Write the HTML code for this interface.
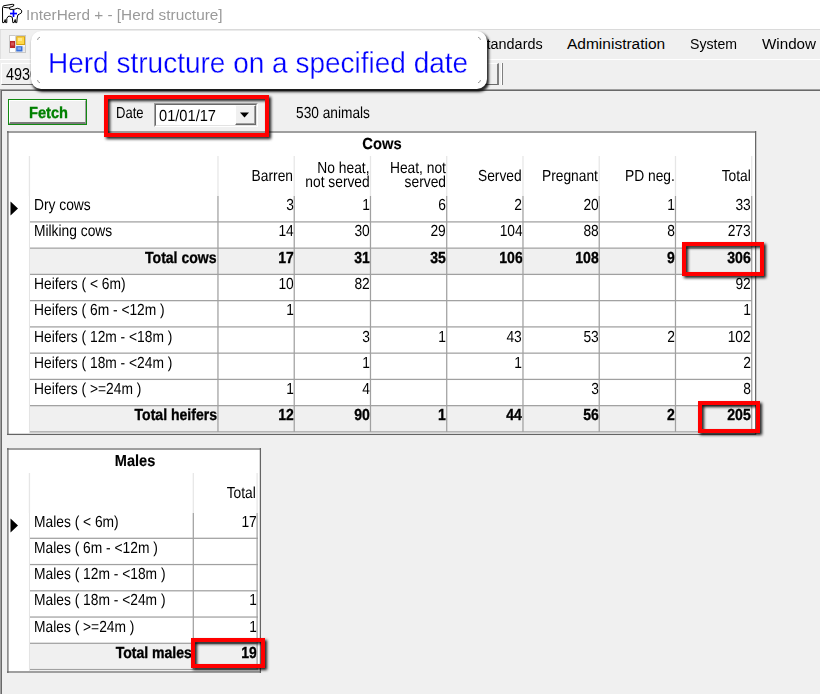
<!DOCTYPE html>
<html><head><meta charset="utf-8"><style>
*{margin:0;padding:0;box-sizing:border-box}
html,body{width:820px;height:694px;overflow:hidden;background:#f0f0f0;font-family:"Liberation Sans",sans-serif;color:#000}
.a{position:absolute}
.t{position:absolute;white-space:pre;line-height:1}
.b{font-weight:bold;-webkit-text-stroke:0.35px currentColor}
.b2{font-weight:bold;-webkit-text-stroke:0.15px currentColor}
.red{position:absolute;border:4px solid #f00;filter:drop-shadow(2px 2px 1.6px rgba(0,0,0,.9))}
</style></head><body>
<div class="a" style="left:0px;top:0px;width:820px;height:29px;background:#fff"></div>
<div class="a" style="left:0px;top:29px;width:820px;height:1px;background:#dadada"></div>
<svg class="a" style="left:0px;top:0px" width="28" height="28" viewBox="0 0 28 28">
 <path d="M2.6 22.6 L2.5 7.6 L3.4 5.8 L12.2 4.3 L13.8 4.5 L13.6 6 L11.8 6.6 L9.2 7.6 L10.2 9.4 L14.1 9.4 L17.3 8.3 L20.2 9.1 L21.8 10.9 L21.4 12.9 L19.4 14.1 L17.9 14.9 L17.2 18 L16.8 22.6 L15.6 22.6 L15.2 19.5 L14.2 22.6 L12.8 22.6 L12.3 17.3 L10 16.1 L8 16.5 L6.8 18.5 L6.8 22.6 L5.6 22.6 L5.2 19.5 L4.2 22.6 Z" fill="#fff" stroke="#000" stroke-width="1" stroke-linejoin="round"/>
 <path d="M3.4 7.3 L8.6 7.9 L10.2 9.4" fill="none" stroke="#000" stroke-width="1"/>
 <rect x="10" y="12.7" width="7" height="1.7" fill="#00f"/>
 <rect x="12.65" y="10" width="1.7" height="7" fill="#00f"/>
</svg>
<div class="t " style="left:26.3px;top:7px;font-size:15.5px;transform-origin:0 0;transform:scaleX(0.99);color:#9a9a9a">InterHerd + - [Herd structure]</div>
<div class="a" style="left:0px;top:30px;width:820px;height:29px;background:#f0f0f0"></div>
<div class="a" style="left:0px;top:30px;width:1px;height:29px;background:#e0e0e0"></div>
<div class="a" style="left:0px;top:59px;width:820px;height:1px;background:#fff"></div>
<svg class="a" style="left:9px;top:35px" width="17" height="18" viewBox="0 0 17 18">
 <rect x="0.5" y="0.5" width="16" height="17" fill="#f4f4f4" stroke="#c8c8c8"/>
 <rect x="1" y="1" width="5" height="4.5" fill="#fff"/>
 <rect x="1" y="13.5" width="5" height="3.5" fill="#fff"/>
 <line x1="6.5" y1="0" x2="6.5" y2="18" stroke="#d4d4d4"/>
 <rect x="1" y="6" width="5" height="7" fill="#b8282a"/>
 <rect x="2" y="7.5" width="3" height="3" fill="#d85858"/>
 <rect x="7.2" y="1.2" width="8.8" height="8.8" fill="#d6a412"/>
 <rect x="8.2" y="2.2" width="6.8" height="6.8" fill="#ffd84a"/>
 <rect x="9" y="3" width="4" height="3" fill="#ffe88a"/>
 <rect x="7.2" y="11.2" width="6.3" height="5.3" fill="#3a70d8"/>
 <rect x="8.5" y="12.3" width="3.5" height="2.5" fill="#86aef0"/>
 <rect x="14.5" y="12" width="1" height="4.5" fill="#d8d8d8"/>
</svg>
<div class="t " style="right:277px;top:36px;font-size:15.5px;text-align:right;transform-origin:100% 0;transform:scaleX(0.93);">Standards</div>
<div class="t " style="left:567px;top:36px;font-size:15.5px;transform-origin:0 0;">Administration</div>
<div class="t " style="left:690.2px;top:36px;font-size:15.5px;transform-origin:0 0;transform:scaleX(0.91);">System</div>
<div class="t " style="left:762px;top:36px;font-size:15.5px;transform-origin:0 0;transform:scaleX(0.98);">Window</div>
<div class="a" style="left:1px;top:63px;width:498px;height:22px;background:#f0f0f0;border-top:1px solid #fff;border-left:1px solid #fff;border-right:2px solid #808080;border-bottom:1px solid #6a6a6a"></div>
<div class="t " style="left:6px;top:67px;font-size:16px;transform-origin:0 0;transform:scaleX(0.9);">4930</div>
<div class="a" style="left:501px;top:63px;width:1px;height:22px;background:#fff"></div>
<div class="a" style="left:502px;top:63px;width:1px;height:22px;background:#808080"></div>
<div class="a" style="left:0px;top:89px;width:820px;height:1px;background:#a0a0a0"></div>
<div class="a" style="left:1px;top:90px;width:819px;height:1px;background:#696969"></div>
<div class="a" style="left:0px;top:89px;width:1px;height:605px;background:#a0a0a0"></div>
<div class="a" style="left:1px;top:90px;width:1px;height:604px;background:#696969"></div>
<div class="a" style="left:8px;top:99px;width:79px;height:26px;border:1px solid #128a12;background:#f0f0f0"></div>
<div class="a" style="left:9px;top:100px;width:77px;height:24px;border-top:1px solid #fff;border-left:1px solid #fff;border-right:1px solid #a0a0a0;border-bottom:2px solid #7a7a7a"></div>
<div class="t b" style="left:29px;top:106px;font-size:16px;transform-origin:0 0;transform:scaleX(0.9145);text-rendering:geometricPrecision;color:#008000">Fetch</div>
<div class="t " style="left:116px;top:106px;font-size:16px;transform-origin:0 0;transform:scaleX(0.81375);text-rendering:geometricPrecision;">Date</div>
<div class="a" style="left:154px;top:103px;width:104px;height:24px;border-top:1px solid #a0a0a0;border-left:1px solid #a0a0a0;border-right:1px solid #fff;border-bottom:1px solid #fff"></div>
<div class="a" style="left:155px;top:104px;width:102px;height:22px;background:#fff;border-top:1px solid #696969;border-left:1px solid #696969;border-right:1px solid #e3e3e3;border-bottom:1px solid #e3e3e3"></div>
<div class="t " style="left:159px;top:109px;font-size:16px;transform-origin:0 0;transform:scaleX(0.9154687499999999);text-rendering:geometricPrecision;">01/01/17</div>
<div class="a" style="left:235px;top:105px;width:21px;height:20px;background:#f0f0f0;border-top:1px solid #f8f8f8;border-left:1px solid #fff;border-right:1px solid #696969;border-bottom:1px solid #696969"></div>
<div class="a" style="left:236px;top:106px;width:19px;height:18px;border-right:1px solid #a0a0a0;border-bottom:1px solid #a0a0a0"></div>
<svg class="a" style="left:240px;top:112px" width="10" height="6"><path d="M0 0.5 L9 0.5 L4.5 5.5 Z" fill="#000"/></svg>
<div class="t " style="left:296px;top:106px;font-size:16px;transform-origin:0 0;transform:scaleX(0.85734375);text-rendering:geometricPrecision;">530 animals</div>
<div class="a" style="left:7px;top:131px;width:749px;height:304px;background:#fff"></div>
<div class="a" style="left:7px;top:131px;width:749px;height:1px;background:#646464;opacity:0.62"></div>
<div class="a" style="left:7px;top:132px;width:749px;height:1px;background:#646464;opacity:0.62"></div>
<div class="a" style="left:7px;top:131px;width:1px;height:304px;background:#646464;opacity:0.72"></div>
<div class="a" style="left:8px;top:131px;width:1px;height:304px;background:#646464;opacity:0.53"></div>
<div class="a" style="left:755px;top:131px;width:1px;height:304px;background:#646464;opacity:0.98"></div>
<div class="a" style="left:756px;top:131px;width:1px;height:304px;background:#646464;opacity:0.27"></div>
<div class="a" style="left:7px;top:433px;width:749px;height:1px;background:#646464;opacity:0.23"></div>
<div class="a" style="left:7px;top:434px;width:749px;height:1px;background:#646464;opacity:1.00"></div>
<div class="a" style="left:7px;top:435px;width:749px;height:1px;background:#646464;opacity:0.02"></div>
<div class="t b2" style="left:82.32499999999999px;width:600px;top:137px;font-size:16px;text-align:center;transform-origin:50% 0;transform:scaleX(0.9203125);text-rendering:geometricPrecision;">Cows</div>
<div class="a" style="left:28px;top:156px;width:1px;height:40px;background:#e6e6e6;opacity:0.18"></div>
<div class="a" style="left:29px;top:156px;width:1px;height:40px;background:#e6e6e6;opacity:1.00"></div>
<div class="a" style="left:30px;top:156px;width:1px;height:40px;background:#e6e6e6;opacity:0.07"></div>
<div class="a" style="left:217px;top:156px;width:1px;height:40px;background:#e6e6e6;opacity:0.66"></div>
<div class="a" style="left:218px;top:156px;width:1px;height:40px;background:#e6e6e6;opacity:0.59"></div>
<div class="a" style="left:293px;top:156px;width:1px;height:40px;background:#e6e6e6;opacity:0.40"></div>
<div class="a" style="left:294px;top:156px;width:1px;height:40px;background:#e6e6e6;opacity:0.85"></div>
<div class="a" style="left:369px;top:156px;width:1px;height:40px;background:#e6e6e6;opacity:0.15"></div>
<div class="a" style="left:370px;top:156px;width:1px;height:40px;background:#e6e6e6;opacity:1.00"></div>
<div class="a" style="left:371px;top:156px;width:1px;height:40px;background:#e6e6e6;opacity:0.10"></div>
<div class="a" style="left:446px;top:156px;width:1px;height:40px;background:#e6e6e6;opacity:0.90"></div>
<div class="a" style="left:447px;top:156px;width:1px;height:40px;background:#e6e6e6;opacity:0.35"></div>
<div class="a" style="left:522px;top:156px;width:1px;height:40px;background:#e6e6e6;opacity:0.65"></div>
<div class="a" style="left:523px;top:156px;width:1px;height:40px;background:#e6e6e6;opacity:0.60"></div>
<div class="a" style="left:598px;top:156px;width:1px;height:40px;background:#e6e6e6;opacity:0.40"></div>
<div class="a" style="left:599px;top:156px;width:1px;height:40px;background:#e6e6e6;opacity:0.85"></div>
<div class="a" style="left:674px;top:156px;width:1px;height:40px;background:#e6e6e6;opacity:0.15"></div>
<div class="a" style="left:675px;top:156px;width:1px;height:40px;background:#e6e6e6;opacity:1.00"></div>
<div class="a" style="left:676px;top:156px;width:1px;height:40px;background:#e6e6e6;opacity:0.10"></div>
<div class="a" style="left:751px;top:156px;width:1px;height:40px;background:#e6e6e6;opacity:0.90"></div>
<div class="a" style="left:752px;top:156px;width:1px;height:40px;background:#e6e6e6;opacity:0.35"></div>
<div class="t " style="right:526.78px;top:169px;font-size:16px;text-align:right;transform-origin:100% 0;transform:scaleX(0.8621875);text-rendering:geometricPrecision;">Barren</div>
<div class="t " style="right:450.53px;top:161px;font-size:16px;text-align:right;transform-origin:100% 0;transform:scaleX(0.8621875);text-rendering:geometricPrecision;">No heat,</div>
<div class="t " style="right:450.53px;top:175px;font-size:16px;text-align:right;transform-origin:100% 0;transform:scaleX(0.8621875);text-rendering:geometricPrecision;">not served</div>
<div class="t " style="right:374.28px;top:161px;font-size:16px;text-align:right;transform-origin:100% 0;transform:scaleX(0.8621875);text-rendering:geometricPrecision;">Heat, not</div>
<div class="t " style="right:374.28px;top:175px;font-size:16px;text-align:right;transform-origin:100% 0;transform:scaleX(0.8621875);text-rendering:geometricPrecision;">served</div>
<div class="t " style="right:298.03px;top:169px;font-size:16px;text-align:right;transform-origin:100% 0;transform:scaleX(0.8621875);text-rendering:geometricPrecision;">Served</div>
<div class="t " style="right:221.77999999999997px;top:169px;font-size:16px;text-align:right;transform-origin:100% 0;transform:scaleX(0.8621875);text-rendering:geometricPrecision;">Pregnant</div>
<div class="t " style="right:145.52999999999997px;top:169px;font-size:16px;text-align:right;transform-origin:100% 0;transform:scaleX(0.8621875);text-rendering:geometricPrecision;">PD neg.</div>
<div class="t " style="right:69.27999999999997px;top:169px;font-size:16px;text-align:right;transform-origin:100% 0;transform:scaleX(0.8621875);text-rendering:geometricPrecision;">Total</div>
<div class="t " style="left:33.55px;top:198px;font-size:16px;transform-origin:0 0;transform:scaleX(0.8621875);text-rendering:geometricPrecision;">Dry cows</div>
<div class="t " style="right:526.48px;top:198px;font-size:16px;text-align:right;transform-origin:100% 0;transform:scaleX(0.8621875);text-rendering:geometricPrecision;">3</div>
<div class="t " style="right:450.22999999999996px;top:198px;font-size:16px;text-align:right;transform-origin:100% 0;transform:scaleX(0.8621875);text-rendering:geometricPrecision;">1</div>
<div class="t " style="right:373.97999999999996px;top:198px;font-size:16px;text-align:right;transform-origin:100% 0;transform:scaleX(0.8621875);text-rendering:geometricPrecision;">6</div>
<div class="t " style="right:297.73px;top:198px;font-size:16px;text-align:right;transform-origin:100% 0;transform:scaleX(0.8621875);text-rendering:geometricPrecision;">2</div>
<div class="t " style="right:221.48000000000002px;top:198px;font-size:16px;text-align:right;transform-origin:100% 0;transform:scaleX(0.8621875);text-rendering:geometricPrecision;">20</div>
<div class="t " style="right:145.23000000000002px;top:198px;font-size:16px;text-align:right;transform-origin:100% 0;transform:scaleX(0.8621875);text-rendering:geometricPrecision;">1</div>
<div class="t " style="right:68.98000000000002px;top:198px;font-size:16px;text-align:right;transform-origin:100% 0;transform:scaleX(0.8621875);text-rendering:geometricPrecision;">33</div>
<div class="t " style="left:33.55px;top:224px;font-size:16px;transform-origin:0 0;transform:scaleX(0.8621875);text-rendering:geometricPrecision;">Milking cows</div>
<div class="t " style="right:526.48px;top:224px;font-size:16px;text-align:right;transform-origin:100% 0;transform:scaleX(0.8621875);text-rendering:geometricPrecision;">14</div>
<div class="t " style="right:450.22999999999996px;top:224px;font-size:16px;text-align:right;transform-origin:100% 0;transform:scaleX(0.8621875);text-rendering:geometricPrecision;">30</div>
<div class="t " style="right:373.97999999999996px;top:224px;font-size:16px;text-align:right;transform-origin:100% 0;transform:scaleX(0.8621875);text-rendering:geometricPrecision;">29</div>
<div class="t " style="right:297.73px;top:224px;font-size:16px;text-align:right;transform-origin:100% 0;transform:scaleX(0.8621875);text-rendering:geometricPrecision;">104</div>
<div class="t " style="right:221.48000000000002px;top:224px;font-size:16px;text-align:right;transform-origin:100% 0;transform:scaleX(0.8621875);text-rendering:geometricPrecision;">88</div>
<div class="t " style="right:145.23000000000002px;top:224px;font-size:16px;text-align:right;transform-origin:100% 0;transform:scaleX(0.8621875);text-rendering:geometricPrecision;">8</div>
<div class="t " style="right:68.98000000000002px;top:224px;font-size:16px;text-align:right;transform-origin:100% 0;transform:scaleX(0.8621875);text-rendering:geometricPrecision;">273</div>
<div class="a" style="left:30px;top:249px;width:722px;height:26px;background:#f0f0f0"></div>
<div class="t b" style="right:603.23px;top:251px;font-size:16px;text-align:right;transform-origin:100% 0;transform:scaleX(0.87671875);text-rendering:geometricPrecision;">Total cows</div>
<div class="t b" style="right:526.48px;top:251px;font-size:16px;text-align:right;transform-origin:100% 0;transform:scaleX(0.87671875);text-rendering:geometricPrecision;">17</div>
<div class="t b" style="right:450.22999999999996px;top:251px;font-size:16px;text-align:right;transform-origin:100% 0;transform:scaleX(0.87671875);text-rendering:geometricPrecision;">31</div>
<div class="t b" style="right:373.97999999999996px;top:251px;font-size:16px;text-align:right;transform-origin:100% 0;transform:scaleX(0.87671875);text-rendering:geometricPrecision;">35</div>
<div class="t b" style="right:297.73px;top:251px;font-size:16px;text-align:right;transform-origin:100% 0;transform:scaleX(0.87671875);text-rendering:geometricPrecision;">106</div>
<div class="t b" style="right:221.48000000000002px;top:251px;font-size:16px;text-align:right;transform-origin:100% 0;transform:scaleX(0.87671875);text-rendering:geometricPrecision;">108</div>
<div class="t b" style="right:145.23000000000002px;top:251px;font-size:16px;text-align:right;transform-origin:100% 0;transform:scaleX(0.87671875);text-rendering:geometricPrecision;">9</div>
<div class="t b" style="right:68.98000000000002px;top:251px;font-size:16px;text-align:right;transform-origin:100% 0;transform:scaleX(0.87671875);text-rendering:geometricPrecision;">306</div>
<div class="t " style="left:33.55px;top:277px;font-size:16px;transform-origin:0 0;transform:scaleX(0.8621875);text-rendering:geometricPrecision;">Heifers ( &lt; 6m)</div>
<div class="t " style="right:526.48px;top:277px;font-size:16px;text-align:right;transform-origin:100% 0;transform:scaleX(0.8621875);text-rendering:geometricPrecision;">10</div>
<div class="t " style="right:450.22999999999996px;top:277px;font-size:16px;text-align:right;transform-origin:100% 0;transform:scaleX(0.8621875);text-rendering:geometricPrecision;">82</div>
<div class="t " style="right:68.98000000000002px;top:277px;font-size:16px;text-align:right;transform-origin:100% 0;transform:scaleX(0.8621875);text-rendering:geometricPrecision;">92</div>
<div class="t " style="left:33.55px;top:303px;font-size:16px;transform-origin:0 0;transform:scaleX(0.8621875);text-rendering:geometricPrecision;">Heifers ( 6m - &lt;12m )</div>
<div class="t " style="right:526.48px;top:303px;font-size:16px;text-align:right;transform-origin:100% 0;transform:scaleX(0.8621875);text-rendering:geometricPrecision;">1</div>
<div class="t " style="right:68.98000000000002px;top:303px;font-size:16px;text-align:right;transform-origin:100% 0;transform:scaleX(0.8621875);text-rendering:geometricPrecision;">1</div>
<div class="t " style="left:33.55px;top:330px;font-size:16px;transform-origin:0 0;transform:scaleX(0.8621875);text-rendering:geometricPrecision;">Heifers ( 12m - &lt;18m )</div>
<div class="t " style="right:450.22999999999996px;top:330px;font-size:16px;text-align:right;transform-origin:100% 0;transform:scaleX(0.8621875);text-rendering:geometricPrecision;">3</div>
<div class="t " style="right:373.97999999999996px;top:330px;font-size:16px;text-align:right;transform-origin:100% 0;transform:scaleX(0.8621875);text-rendering:geometricPrecision;">1</div>
<div class="t " style="right:297.73px;top:330px;font-size:16px;text-align:right;transform-origin:100% 0;transform:scaleX(0.8621875);text-rendering:geometricPrecision;">43</div>
<div class="t " style="right:221.48000000000002px;top:330px;font-size:16px;text-align:right;transform-origin:100% 0;transform:scaleX(0.8621875);text-rendering:geometricPrecision;">53</div>
<div class="t " style="right:145.23000000000002px;top:330px;font-size:16px;text-align:right;transform-origin:100% 0;transform:scaleX(0.8621875);text-rendering:geometricPrecision;">2</div>
<div class="t " style="right:68.98000000000002px;top:330px;font-size:16px;text-align:right;transform-origin:100% 0;transform:scaleX(0.8621875);text-rendering:geometricPrecision;">102</div>
<div class="t " style="left:33.55px;top:356px;font-size:16px;transform-origin:0 0;transform:scaleX(0.8621875);text-rendering:geometricPrecision;">Heifers ( 18m - &lt;24m )</div>
<div class="t " style="right:450.22999999999996px;top:356px;font-size:16px;text-align:right;transform-origin:100% 0;transform:scaleX(0.8621875);text-rendering:geometricPrecision;">1</div>
<div class="t " style="right:297.73px;top:356px;font-size:16px;text-align:right;transform-origin:100% 0;transform:scaleX(0.8621875);text-rendering:geometricPrecision;">1</div>
<div class="t " style="right:68.98000000000002px;top:356px;font-size:16px;text-align:right;transform-origin:100% 0;transform:scaleX(0.8621875);text-rendering:geometricPrecision;">2</div>
<div class="t " style="left:33.55px;top:382px;font-size:16px;transform-origin:0 0;transform:scaleX(0.8621875);text-rendering:geometricPrecision;">Heifers ( &gt;=24m )</div>
<div class="t " style="right:526.48px;top:382px;font-size:16px;text-align:right;transform-origin:100% 0;transform:scaleX(0.8621875);text-rendering:geometricPrecision;">1</div>
<div class="t " style="right:450.22999999999996px;top:382px;font-size:16px;text-align:right;transform-origin:100% 0;transform:scaleX(0.8621875);text-rendering:geometricPrecision;">4</div>
<div class="t " style="right:221.48000000000002px;top:382px;font-size:16px;text-align:right;transform-origin:100% 0;transform:scaleX(0.8621875);text-rendering:geometricPrecision;">3</div>
<div class="t " style="right:68.98000000000002px;top:382px;font-size:16px;text-align:right;transform-origin:100% 0;transform:scaleX(0.8621875);text-rendering:geometricPrecision;">8</div>
<div class="a" style="left:30px;top:406px;width:722px;height:26px;background:#f0f0f0"></div>
<div class="t b" style="right:603.23px;top:408px;font-size:16px;text-align:right;transform-origin:100% 0;transform:scaleX(0.87671875);text-rendering:geometricPrecision;">Total heifers</div>
<div class="t b" style="right:526.48px;top:408px;font-size:16px;text-align:right;transform-origin:100% 0;transform:scaleX(0.87671875);text-rendering:geometricPrecision;">12</div>
<div class="t b" style="right:450.22999999999996px;top:408px;font-size:16px;text-align:right;transform-origin:100% 0;transform:scaleX(0.87671875);text-rendering:geometricPrecision;">90</div>
<div class="t b" style="right:373.97999999999996px;top:408px;font-size:16px;text-align:right;transform-origin:100% 0;transform:scaleX(0.87671875);text-rendering:geometricPrecision;">1</div>
<div class="t b" style="right:297.73px;top:408px;font-size:16px;text-align:right;transform-origin:100% 0;transform:scaleX(0.87671875);text-rendering:geometricPrecision;">44</div>
<div class="t b" style="right:221.48000000000002px;top:408px;font-size:16px;text-align:right;transform-origin:100% 0;transform:scaleX(0.87671875);text-rendering:geometricPrecision;">56</div>
<div class="t b" style="right:145.23000000000002px;top:408px;font-size:16px;text-align:right;transform-origin:100% 0;transform:scaleX(0.87671875);text-rendering:geometricPrecision;">2</div>
<div class="t b" style="right:68.98000000000002px;top:408px;font-size:16px;text-align:right;transform-origin:100% 0;transform:scaleX(0.87671875);text-rendering:geometricPrecision;">205</div>
<div class="a" style="left:28px;top:196px;width:1px;height:237px;background:#e3e3e3;opacity:0.05"></div>
<div class="a" style="left:29px;top:196px;width:1px;height:237px;background:#e3e3e3;opacity:0.95"></div>
<div class="a" style="left:217px;top:196px;width:1px;height:236px;background:#a0a0a0;opacity:0.66"></div>
<div class="a" style="left:218px;top:196px;width:1px;height:236px;background:#a0a0a0;opacity:0.59"></div>
<div class="a" style="left:293px;top:196px;width:1px;height:236px;background:#a0a0a0;opacity:0.40"></div>
<div class="a" style="left:294px;top:196px;width:1px;height:236px;background:#a0a0a0;opacity:0.85"></div>
<div class="a" style="left:369px;top:196px;width:1px;height:236px;background:#a0a0a0;opacity:0.15"></div>
<div class="a" style="left:370px;top:196px;width:1px;height:236px;background:#a0a0a0;opacity:1.00"></div>
<div class="a" style="left:371px;top:196px;width:1px;height:236px;background:#a0a0a0;opacity:0.10"></div>
<div class="a" style="left:446px;top:196px;width:1px;height:236px;background:#a0a0a0;opacity:0.90"></div>
<div class="a" style="left:447px;top:196px;width:1px;height:236px;background:#a0a0a0;opacity:0.35"></div>
<div class="a" style="left:522px;top:196px;width:1px;height:236px;background:#a0a0a0;opacity:0.65"></div>
<div class="a" style="left:523px;top:196px;width:1px;height:236px;background:#a0a0a0;opacity:0.60"></div>
<div class="a" style="left:598px;top:196px;width:1px;height:236px;background:#a0a0a0;opacity:0.40"></div>
<div class="a" style="left:599px;top:196px;width:1px;height:236px;background:#a0a0a0;opacity:0.85"></div>
<div class="a" style="left:674px;top:196px;width:1px;height:236px;background:#a0a0a0;opacity:0.15"></div>
<div class="a" style="left:675px;top:196px;width:1px;height:236px;background:#a0a0a0;opacity:1.00"></div>
<div class="a" style="left:676px;top:196px;width:1px;height:236px;background:#a0a0a0;opacity:0.10"></div>
<div class="a" style="left:751px;top:196px;width:1px;height:236px;background:#a0a0a0;opacity:0.90"></div>
<div class="a" style="left:752px;top:196px;width:1px;height:236px;background:#a0a0a0;opacity:0.35"></div>
<div class="a" style="left:30px;top:221px;width:722px;height:1px;background:#a0a0a0;opacity:0.72"></div>
<div class="a" style="left:30px;top:222px;width:722px;height:1px;background:#a0a0a0;opacity:0.53"></div>
<div class="a" style="left:30px;top:247px;width:722px;height:1px;background:#a0a0a0;opacity:0.47"></div>
<div class="a" style="left:30px;top:248px;width:722px;height:1px;background:#a0a0a0;opacity:0.78"></div>
<div class="a" style="left:30px;top:273px;width:722px;height:1px;background:#a0a0a0;opacity:0.23"></div>
<div class="a" style="left:30px;top:274px;width:722px;height:1px;background:#a0a0a0;opacity:1.00"></div>
<div class="a" style="left:30px;top:275px;width:722px;height:1px;background:#a0a0a0;opacity:0.02"></div>
<div class="a" style="left:30px;top:300px;width:722px;height:1px;background:#a0a0a0;opacity:0.98"></div>
<div class="a" style="left:30px;top:301px;width:722px;height:1px;background:#a0a0a0;opacity:0.27"></div>
<div class="a" style="left:30px;top:326px;width:722px;height:1px;background:#a0a0a0;opacity:0.73"></div>
<div class="a" style="left:30px;top:327px;width:722px;height:1px;background:#a0a0a0;opacity:0.52"></div>
<div class="a" style="left:30px;top:352px;width:722px;height:1px;background:#a0a0a0;opacity:0.48"></div>
<div class="a" style="left:30px;top:353px;width:722px;height:1px;background:#a0a0a0;opacity:0.77"></div>
<div class="a" style="left:30px;top:378px;width:722px;height:1px;background:#a0a0a0;opacity:0.23"></div>
<div class="a" style="left:30px;top:379px;width:722px;height:1px;background:#a0a0a0;opacity:1.00"></div>
<div class="a" style="left:30px;top:380px;width:722px;height:1px;background:#a0a0a0;opacity:0.02"></div>
<div class="a" style="left:30px;top:405px;width:722px;height:1px;background:#a0a0a0;opacity:0.98"></div>
<div class="a" style="left:30px;top:406px;width:722px;height:1px;background:#a0a0a0;opacity:0.27"></div>
<div class="a" style="left:30px;top:431px;width:722px;height:1px;background:#a0a0a0;opacity:0.73"></div>
<div class="a" style="left:30px;top:432px;width:722px;height:1px;background:#a0a0a0;opacity:0.52"></div>
<svg class="a" style="left:10px;top:201px" width="9" height="15"><path d="M0.5 0.5 L8 7.5 L0.5 14.5 Z" fill="#000"/></svg>
<div class="a" style="left:7px;top:448px;width:254px;height:225px;background:#fff"></div>
<div class="a" style="left:7px;top:448px;width:254px;height:1px;background:#646464;opacity:0.62"></div>
<div class="a" style="left:7px;top:449px;width:254px;height:1px;background:#646464;opacity:0.62"></div>
<div class="a" style="left:7px;top:448px;width:1px;height:225px;background:#646464;opacity:0.72"></div>
<div class="a" style="left:8px;top:448px;width:1px;height:225px;background:#646464;opacity:0.53"></div>
<div class="a" style="left:259px;top:448px;width:1px;height:225px;background:#646464;opacity:0.23"></div>
<div class="a" style="left:260px;top:448px;width:1px;height:225px;background:#646464;opacity:1.00"></div>
<div class="a" style="left:261px;top:448px;width:1px;height:225px;background:#646464;opacity:0.02"></div>
<div class="a" style="left:7px;top:671px;width:254px;height:1px;background:#646464;opacity:0.62"></div>
<div class="a" style="left:7px;top:672px;width:254px;height:1px;background:#646464;opacity:0.62"></div>
<div class="t b2" style="left:-165.3px;width:600px;top:454px;font-size:16px;text-align:center;transform-origin:50% 0;transform:scaleX(0.9106249999999999);text-rendering:geometricPrecision;">Males</div>
<div class="a" style="left:28px;top:473px;width:1px;height:40px;background:#e6e6e6;opacity:0.18"></div>
<div class="a" style="left:29px;top:473px;width:1px;height:40px;background:#e6e6e6;opacity:1.00"></div>
<div class="a" style="left:30px;top:473px;width:1px;height:40px;background:#e6e6e6;opacity:0.07"></div>
<div class="a" style="left:192px;top:473px;width:1px;height:40px;background:#e6e6e6;opacity:0.32"></div>
<div class="a" style="left:193px;top:473px;width:1px;height:40px;background:#e6e6e6;opacity:0.93"></div>
<div class="a" style="left:256px;top:473px;width:1px;height:40px;background:#e6e6e6;opacity:0.52"></div>
<div class="a" style="left:257px;top:473px;width:1px;height:40px;background:#e6e6e6;opacity:0.73"></div>
<div class="t " style="right:564.7px;top:486px;font-size:16px;text-align:right;transform-origin:100% 0;transform:scaleX(0.8621875);text-rendering:geometricPrecision;">Total</div>
<div class="t " style="left:33.55px;top:515px;font-size:16px;transform-origin:0 0;transform:scaleX(0.8621875);text-rendering:geometricPrecision;">Males ( &lt; 6m)</div>
<div class="t " style="right:563.5999999999999px;top:515px;font-size:16px;text-align:right;transform-origin:100% 0;transform:scaleX(0.8621875);text-rendering:geometricPrecision;">17</div>
<div class="t " style="left:33.55px;top:541px;font-size:16px;transform-origin:0 0;transform:scaleX(0.8621875);text-rendering:geometricPrecision;">Males ( 6m - &lt;12m )</div>
<div class="t " style="left:33.55px;top:567px;font-size:16px;transform-origin:0 0;transform:scaleX(0.8621875);text-rendering:geometricPrecision;">Males ( 12m - &lt;18m )</div>
<div class="t " style="left:33.55px;top:593px;font-size:16px;transform-origin:0 0;transform:scaleX(0.8621875);text-rendering:geometricPrecision;">Males ( 18m - &lt;24m )</div>
<div class="t " style="right:563.5999999999999px;top:593px;font-size:16px;text-align:right;transform-origin:100% 0;transform:scaleX(0.8621875);text-rendering:geometricPrecision;">1</div>
<div class="t " style="left:33.55px;top:620px;font-size:16px;transform-origin:0 0;transform:scaleX(0.8621875);text-rendering:geometricPrecision;">Males ( &gt;=24m )</div>
<div class="t " style="right:563.5999999999999px;top:620px;font-size:16px;text-align:right;transform-origin:100% 0;transform:scaleX(0.8621875);text-rendering:geometricPrecision;">1</div>
<div class="a" style="left:30px;top:644px;width:228px;height:26px;background:#f0f0f0"></div>
<div class="t b" style="right:627.9px;top:646px;font-size:16px;text-align:right;transform-origin:100% 0;transform:scaleX(0.87671875);text-rendering:geometricPrecision;">Total males</div>
<div class="t b" style="right:563.5999999999999px;top:646px;font-size:16px;text-align:right;transform-origin:100% 0;transform:scaleX(0.87671875);text-rendering:geometricPrecision;">19</div>
<div class="a" style="left:28px;top:513px;width:1px;height:158px;background:#e3e3e3;opacity:0.05"></div>
<div class="a" style="left:29px;top:513px;width:1px;height:158px;background:#e3e3e3;opacity:0.95"></div>
<div class="a" style="left:192px;top:513px;width:1px;height:157px;background:#a0a0a0;opacity:0.32"></div>
<div class="a" style="left:193px;top:513px;width:1px;height:157px;background:#a0a0a0;opacity:0.93"></div>
<div class="a" style="left:256px;top:513px;width:1px;height:157px;background:#a0a0a0;opacity:0.52"></div>
<div class="a" style="left:257px;top:513px;width:1px;height:157px;background:#a0a0a0;opacity:0.73"></div>
<div class="a" style="left:30px;top:537px;width:228px;height:1px;background:#a0a0a0;opacity:0.33"></div>
<div class="a" style="left:30px;top:538px;width:228px;height:1px;background:#a0a0a0;opacity:0.92"></div>
<div class="a" style="left:30px;top:563px;width:228px;height:1px;background:#a0a0a0;opacity:0.08"></div>
<div class="a" style="left:30px;top:564px;width:228px;height:1px;background:#a0a0a0;opacity:1.00"></div>
<div class="a" style="left:30px;top:565px;width:228px;height:1px;background:#a0a0a0;opacity:0.17"></div>
<div class="a" style="left:30px;top:590px;width:228px;height:1px;background:#a0a0a0;opacity:0.83"></div>
<div class="a" style="left:30px;top:591px;width:228px;height:1px;background:#a0a0a0;opacity:0.42"></div>
<div class="a" style="left:30px;top:616px;width:228px;height:1px;background:#a0a0a0;opacity:0.58"></div>
<div class="a" style="left:30px;top:617px;width:228px;height:1px;background:#a0a0a0;opacity:0.67"></div>
<div class="a" style="left:30px;top:642px;width:228px;height:1px;background:#a0a0a0;opacity:0.33"></div>
<div class="a" style="left:30px;top:643px;width:228px;height:1px;background:#a0a0a0;opacity:0.92"></div>
<div class="a" style="left:30px;top:668px;width:228px;height:1px;background:#a0a0a0;opacity:0.08"></div>
<div class="a" style="left:30px;top:669px;width:228px;height:1px;background:#a0a0a0;opacity:1.00"></div>
<div class="a" style="left:30px;top:670px;width:228px;height:1px;background:#a0a0a0;opacity:0.17"></div>
<svg class="a" style="left:10px;top:518px" width="9" height="15"><path d="M0.5 0.5 L8 7.5 L0.5 14.5 Z" fill="#000"/></svg>
<div class="red" style="left:104px;top:95px;width:165px;height:42px"></div>
<div class="red" style="left:682px;top:242px;width:82px;height:34px"></div>
<div class="red" style="left:698px;top:401px;width:62px;height:32px"></div>
<div class="red" style="left:191px;top:638px;width:74px;height:30px"></div>
<div class="a" style="left:31px;top:31px;width:456px;height:58px;background:#fff;border-radius:10px;box-shadow:1.2px 2.2px 2.6px rgba(0,0,0,.85)"></div>
<svg class="a" style="left:31px;top:31px" width="456" height="58" viewBox="0 0 456 58">
 <g fill="none" stroke="#8c8c8c" stroke-width="0.9">
  <path d="M6.5 9 Q6.8 6.6 9 6.2"/>
  <path d="M449.5 9 Q449.2 6.6 447 6.2"/>
  <path d="M6.5 49 Q6.8 51.4 9 51.8"/>
  <path d="M449.5 49 Q449.2 51.4 447 51.8"/>
 </g>
</svg>
<div class="t " style="left:47.8px;top:49px;font-size:29px;transform-origin:0 0;transform:scaleX(0.9654);color:#0000ff;-webkit-text-stroke:0.3px #fff">Herd structure on a specified date</div>
</body></html>
